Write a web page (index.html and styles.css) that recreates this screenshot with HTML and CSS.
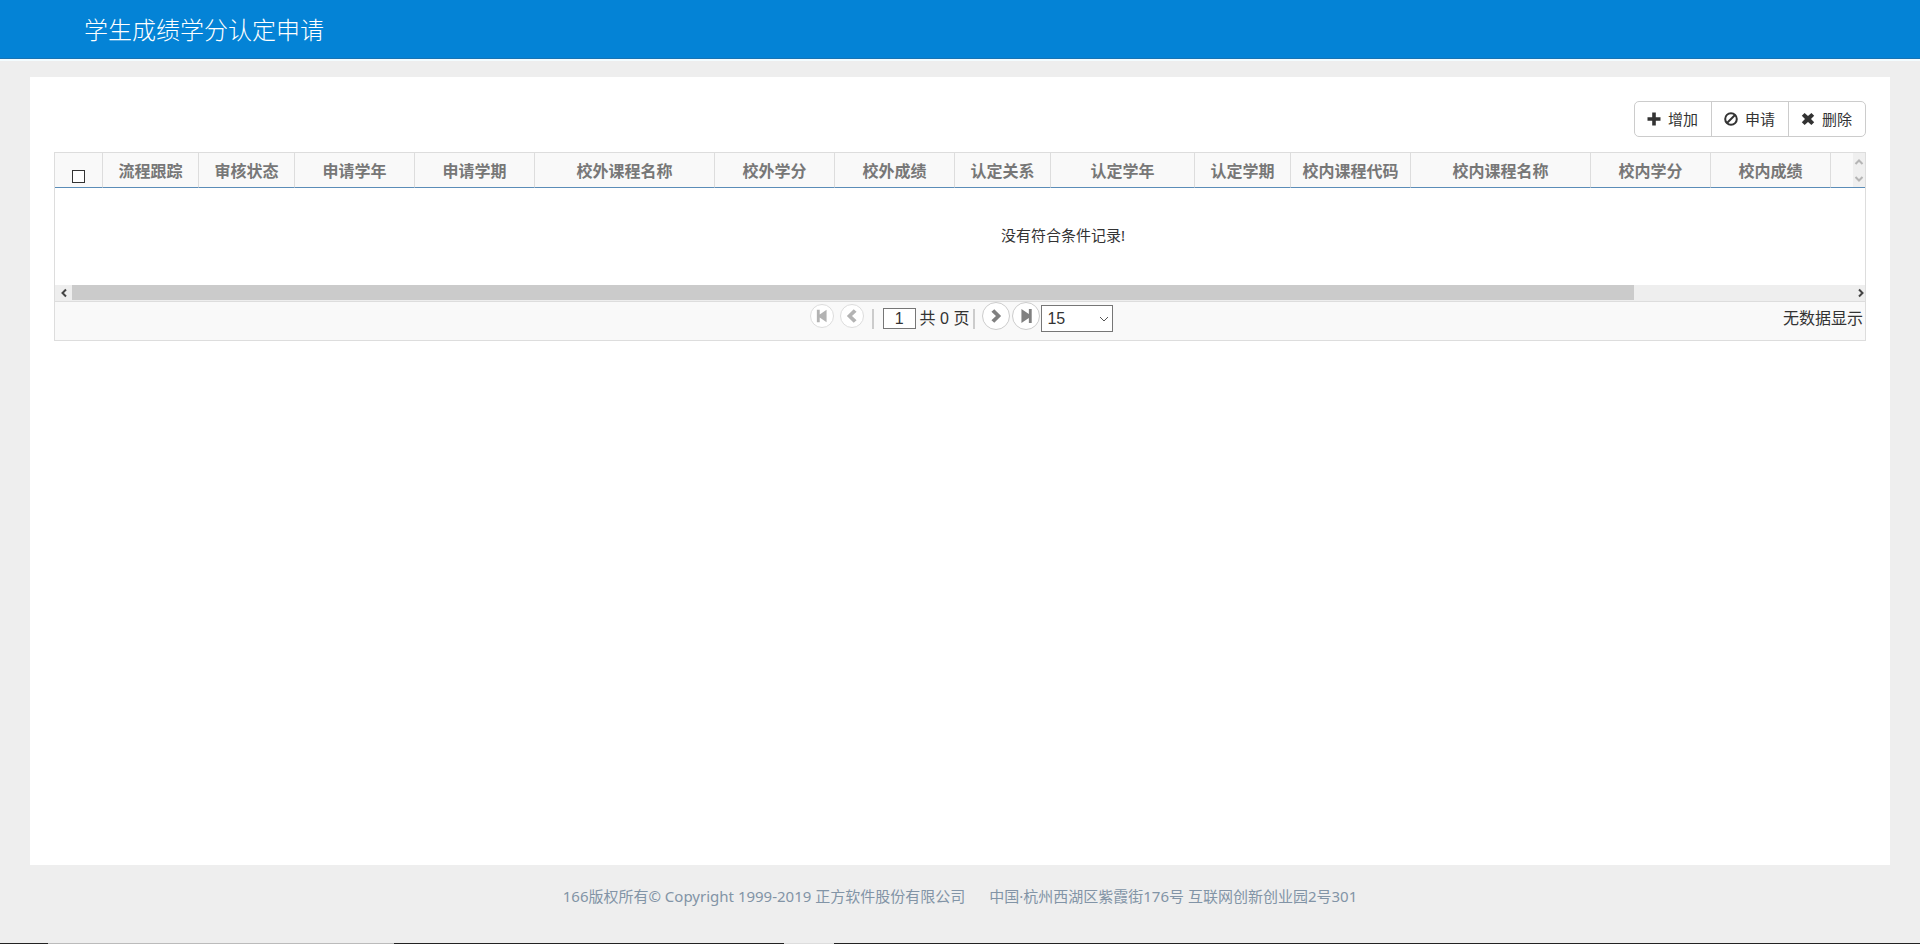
FILE: index.html
```html
<!DOCTYPE html>
<html lang="zh-CN">
<head>
<meta charset="utf-8">
<title>学生成绩学分认定申请</title>
<link rel="stylesheet" href="styles.css">
</head>
<body>
<header class="navbar"><h1 class="navbar-title">学生成绩学分认定申请</h1></header>
<main class="panel">
  <div class="toolbar">
    <div class="btn-group">
      <button type="button" class="btn"><svg class="btn-icon" viewBox="0 0 14 14" aria-hidden="true"><path d="M5.200.5h3.600v4.700h4.700v3.600H8.800v4.700H5.200V8.800H.5V5.200h4.700z"/></svg>增加</button>
      <button type="button" class="btn"><svg class="btn-icon" viewBox="0 0 14 14" aria-hidden="true"><circle cx="7" cy="7" r="5.800" fill="none" stroke="currentColor" stroke-width="2"/><path d="M3 11L11 3" stroke="currentColor" stroke-width="2"/></svg>申请</button>
      <button type="button" class="btn"><svg class="btn-icon" viewBox="0 0 14 14" aria-hidden="true"><path d="M.8 3.800L3.600 1 7 4.100 10.400 1l2.800 2.800L10 7l3.200 3.200-2.800 2.800L7 9.900 3.600 13 .8 10.200 4 7z"/></svg>删除</button>
    </div>
  </div>
  <section class="grid">
    <div class="grid-view">
      <table class="grid-table">
        <colgroup>
          <col class="w-check"><col class="w-sm"><col class="w-sm"><col class="w-md"><col class="w-md"><col class="w-xl"><col class="w-md"><col class="w-md"><col class="w-sm"><col class="w-lg"><col class="w-sm"><col class="w-md"><col class="w-xl"><col class="w-md"><col class="w-md"><col>
        </colgroup>
        <thead>
          <tr>
            <th><input type="checkbox" class="check" aria-label="全选"></th>
            <th>流程跟踪</th><th>审核状态</th><th>申请学年</th><th>申请学期</th><th>校外课程名称</th><th>校外学分</th><th>校外成绩</th><th>认定关系</th><th>认定学年</th><th>认定学期</th><th>校内课程代码</th><th>校内课程名称</th><th>校内学分</th><th>校内成绩</th><th></th>
          </tr>
        </thead>
        <tbody><tr><td colspan="16">没有符合条件记录!</td></tr></tbody>
      </table>
      <div class="head-scroll" aria-hidden="true">
        <svg viewBox="0 0 10 6"><path d="M1.500 5L5 1.500 8.500 5"/></svg>
        <svg viewBox="0 0 10 6"><path d="M1.500 1L5 4.500 8.500 1"/></svg>
      </div>
    </div>
    <div class="scrollbar">
      <button type="button" class="scroll-btn" aria-label="向左滚动"><svg viewBox="0 0 8 10"><path d="M6 1.500L2.500 5 6 8.500"/></svg></button>
      <div class="scroll-track"><div class="scroll-thumb"></div></div>
      <button type="button" class="scroll-btn" aria-label="向右滚动"><svg viewBox="0 0 8 10"><path d="M2 1.500L5.500 5 2 8.500"/></svg></button>
    </div>
    <div class="pager">
      <div class="pager-nav">
        <button type="button" class="page-btn is-disabled" aria-label="首页" disabled><svg viewBox="0 0 14 14"><path d="M2.500 1.500h2.500v4.200L11 1.500v11L5 8.300v4.200H2.500z"/></svg></button>
        <button type="button" class="page-btn is-disabled" aria-label="上一页" disabled><svg viewBox="0 0 14 14"><path d="M8.500 1L11 3.300 7 7l4 3.700L8.500 13 2.500 7z"/></svg></button>
        <span class="pager-sep"></span>
        <label class="page-field"><input type="text" class="page-input" value="1" aria-label="页码"><span>共 0 页</span></label>
        <span class="pager-sep is-tight"></span>
        <button type="button" class="page-btn" aria-label="下一页"><svg viewBox="0 0 14 14"><path d="M5.500 1L3 3.300 7 7l-4 3.700L5.500 13l6-6z"/></svg></button>
        <button type="button" class="page-btn" aria-label="末页"><svg viewBox="0 0 14 14"><path d="M12 .8H9.500v4.500L3 .8v12.400l6.500-4.500v4.500H12z"/></svg></button>
        <span class="select-wrap">
          <select class="page-size" aria-label="每页条数"><option>15</option><option>30</option><option>50</option></select>
          <svg class="select-arrow" viewBox="0 0 10 6" aria-hidden="true"><path d="M1 1l4 4 4-4"/></svg>
        </span>
      </div>
      <span class="pager-info">无数据显示</span>
    </div>
  </section>
</main>
<footer class="footer">
  <span>166版权所有© Copyright 1999-2019 正方软件股份有限公司</span>
  <span>中国·杭州西湖区紫霞街176号 互联网创新创业园2号301</span>
</footer>
<div class="edge"><i class="edge-dark edge-a"></i><i class="edge-gray"></i><i class="edge-dark edge-b"></i><i class="edge-light"></i><i class="edge-dark edge-c"></i></div>
</body>
</html>
```
FILE: styles.css
```css
* { box-sizing: border-box; }

body {
  display: flex;
  flex-direction: column;
  min-height: 100vh;
  margin: 0;
  background: #eee;
  color: #333;
  font: 16px/24px "Noto Sans", "Noto Sans CJK SC", sans-serif;
}

button, input, select { margin: 0; font: inherit; color: inherit; }

.navbar {
  padding: 14px 84px;
  background: #0483d6;
  border-bottom: 1px solid #1a73b2;
  box-shadow: 0 2px 0 #f3fcff;
}

.navbar-title {
  margin: 0;
  color: #fff;
  font: 300 24px/30px "Noto Sans CJK SC", sans-serif;
}

.panel {
  flex: 1;
  margin: 18px 30px 0;
  padding: 24px;
  background: #fff;
}

.toolbar { display: flex; justify-content: flex-end; }

.btn-group {
  display: flex;
  border: 1px solid #ccc;
  border-radius: 5px;
  background: #fff;
}

.btn {
  display: flex;
  align-items: center;
  gap: 7px;
  height: 34px;
  padding: 0 13px 0 12px;
  border: 0;
  background: none;
  font-size: 15px;
}

.btn + .btn { border-left: 1px solid #ccc; }

.btn-icon { width: 14px; height: 14px; fill: currentColor; }

.grid { margin-top: 15px; border: 1px solid #ddd; }

.grid-view { position: relative; overflow: hidden; }

.grid-table {
  width: 2016px;
  table-layout: fixed;
  border-collapse: separate;
  border-spacing: 0;
}

.w-check { width: 48px; }
.w-sm { width: 96px; }
.w-md { width: 120px; }
.w-lg { width: 144px; }
.w-xl { width: 180px; }

.grid-table th {
  height: 35px;
  padding: 2px 0 0;
  border-right: 1px solid #ddd;
  border-bottom: 1px solid #5b8db8;
  background: #f9f9f9;
  color: #777;
  white-space: nowrap;
}

.grid-table td {
  height: 97px;
  padding: 0 0 4px;
  font-size: 15px;
  text-align: center;
}

.check {
  display: block;
  width: 13px;
  height: 13px;
  margin: 11px auto 0;
  appearance: none;
  border: 1px solid #333;
  background: #fff;
}

.head-scroll {
  position: absolute;
  top: 0;
  right: 0;
  display: flex;
  flex-direction: column;
  align-items: center;
  justify-content: space-between;
  width: 12px;
  height: 34px;
  padding: 6px 0 5px;
  background: #efefef;
}

.head-scroll svg { width: 10px; height: 6px; fill: none; stroke: #b5b5b5; stroke-width: 2; }

.scrollbar { display: flex; height: 16px; background: #eee; }

.scroll-btn {
  display: flex;
  align-items: center;
  justify-content: center;
  width: 17px;
  padding: 0;
  border: 0;
  background: none;
}

.scroll-track { flex: 1; }

.scroll-track + .scroll-btn { width: 8px; }

.scroll-btn svg { width: 8px; height: 10px; fill: none; stroke: #444; stroke-width: 2; }

.scroll-thumb { width: 87.5%; height: 15px; background: #cbcbcb; }

.pager {
  display: grid;
  grid-template-columns: 1fr auto 1fr;
  height: 39px;
  border-top: 1px solid #ddd;
  background: #f9f9f9;
}

.pager-nav { grid-column: 2; display: flex; align-items: center; height: 33px; }

.pager-info { justify-self: end; padding: 4px 2px 0; }

.page-btn {
  display: flex;
  align-items: center;
  justify-content: center;
  width: 28px;
  height: 28px;
  margin: 0 1px 5px;
  padding: 0;
  border: 1px solid #ccc;
  border-radius: 50%;
  background: #fff;
}

.page-btn svg { width: 16px; height: 16px; fill: #808080; }

.page-btn.is-disabled {
  width: 24px;
  height: 24px;
  margin: 0 3px 5px;
  border-color: #ddd;
}

.page-btn.is-disabled svg { fill: #b3b3b3; }

.pager-sep { width: 2px; height: 20px; margin: 0 9px 0 5px; background: #ccc; }

.pager-sep.is-tight { margin: 0 6px 0 4px; }

.page-field { display: flex; align-items: center; gap: 4px; }

.page-input {
  width: 33px;
  height: 21px;
  padding: 0;
  border: 1px solid #767676;
  background: #fff;
  font-family: "Liberation Sans", sans-serif;
  text-align: center;
}

.page-field, .page-size { font-family: "Liberation Sans", "Noto Sans CJK SC", sans-serif; }

.select-wrap { position: relative; }

.page-size {
  display: block;
  width: 72px;
  height: 27px;
  padding: 0 5px;
  appearance: none;
  border: 1px solid #767676;
  border-radius: 0;
  background: #fff;
}

.select-arrow {
  position: absolute;
  top: 11px;
  right: 4px;
  width: 10px;
  height: 6px;
  fill: none;
  stroke: #555;
  pointer-events: none;
}

.footer {
  display: flex;
  justify-content: center;
  gap: 24px;
  padding: 19px 0 35px;
  color: #8294a6;
  font-size: 15px;
}

.edge { display: flex; height: 1px; }
.edge-dark { background: #222; }
.edge-gray { flex: 0 0 18%; background: #bbb; }
.edge-light { flex: 0 0 50px; background: #ddd; }
.edge-a { flex: 0 0 48px; }
.edge-b { flex: 1; }
.edge-c { flex: 0 0 1086px; }
```
